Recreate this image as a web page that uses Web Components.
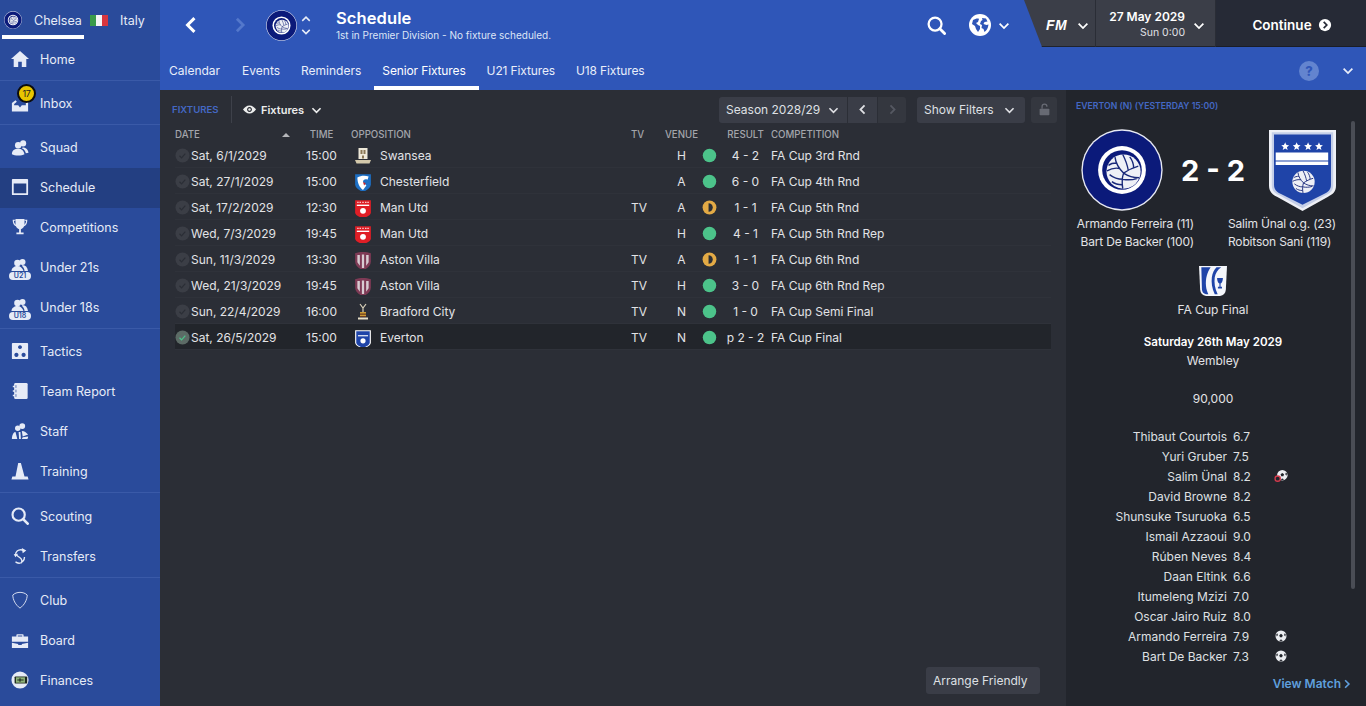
<!DOCTYPE html>
<html lang="en"><head><meta charset="utf-8"><title>Schedule</title>
<style>
html,body{margin:0;height:100%;overflow:hidden;background:#2b2e36}
body{font-family:Inter,"Open Sans","Liberation Sans",sans-serif;font-size:12px;color:#e8e9ec}
</style></head><body>
<fm-app></fm-app>
<script>
const BALL=`<circle cx="12" cy="12" r="11" fill="#eef0f6"/><path d="M12 13C9 10 7 7 6.500 2.700M12 13c3-2 6-3.500 9.500-4.500M12 13c-1 3-1.200 6-.5 10M9.500 10C7 9.500 4 10 1.300 11.500M7.500 6.500C5.500 6.500 3.500 7 2.300 8M15 11c-.5-3-1.500-6-3.500-10M18.500 9.500c0-2.500-1-5-2.500-7M11.500 17c-3 0-6-1-8.500-3M11 20.500c-2.500 0-4.500-.5-6.500-2M12 13c3 2 6 3 10 3M11.500 17c3 .5 6 .5 9-.5" fill="none" stroke="#1a2a7a" stroke-width=".9"/>`;
const ICONS={
home:`<path fill="currentColor" d="M10 1 0 10h3v9h5v-6h4v6h5v-9h3z"/>`,
inbox:`<path fill="currentColor" d="M1 19.500V10l4-3 1.500 1.500L3.500 11v1.500H8l2 2.500 2-2.500h4.500V9H19v10.500z"/>`,
people:`<circle cx="8" cy="8" r="3.600" fill="currentColor"/><circle cx="13.500" cy="6" r="3.400" fill="currentColor"/><path fill="currentColor" d="M1 18c0-4 3-6 7-6s6 2 7 6c-3 2-11 2-14 0zM13 10.500c3 0 6 2 6.500 6l-3 .5c-.5-2-2-5-4.500-5.500z"/>`,
cal:`<path fill="currentColor" fill-rule="evenodd" d="M2 1h16a1 1 0 0 1 1 1v16a1 1 0 0 1-1 1H2a1 1 0 0 1-1-1V2a1 1 0 0 1 1-1zm1 5v11h14V6z"/>`,
trophy:`<path fill="currentColor" d="M5 1h10v6c0 3-2 5-4 5.500V16h3v2H6v-2h3v-3.500C7 12 5 10 5 7z"/><path fill="none" stroke="currentColor" stroke-width="1.200" d="M5 2.500H2.500c0 3 1 5 3 6M15 2.500h2.500c0 3-1 5-3 6"/>`,
u:`<circle cx="8.500" cy="5" r="3.300" fill="currentColor"/><circle cx="13.500" cy="4" r="3" fill="currentColor"/><path fill="currentColor" d="M2.500 13c0-3 3-5 6-5s5 2 6 5zM13.500 7c3 0 5 2 5.500 6h-3.500c0-2-1-4-2.500-5z"/><rect x="0" y="14" width="22" height="8" rx="4" fill="currentColor"/>`,
tactics:`<path fill="currentColor" fill-rule="evenodd" d="M2 1h16a1 1 0 0 1 1 1v16a1 1 0 0 1-1 1H2a1 1 0 0 1-1-1V2a1 1 0 0 1 1-1zm8 2.500a2.200 2.200 0 1 0 .01 0zM6 12a2.300 2.300 0 1 0 .01 0zm8 0a2.300 2.300 0 1 0 .01 0z"/>`,
book:`<path fill="currentColor" d="M5 1h12a1.500 1.500 0 0 1 1.500 1.500v15A1.500 1.500 0 0 1 17 19H5a1.500 1.500 0 0 1-1.500-1.500V2.500A1.500 1.500 0 0 1 5 1z"/><path fill="none" stroke="currentColor" stroke-width="1.400" d="M2 5h3M2 10h3M2 15h3"/><path fill="none" stroke="#2a4b9b" stroke-width=".8" d="M5.500 3.500v3M5.500 8.500v3M5.500 13.500v3"/>`,
staff:`<circle cx="12.500" cy="4.500" r="3.200" fill="currentColor"/><circle cx="7.500" cy="7" r="3" fill="currentColor"/><path fill="currentColor" d="M1 19c0-5 2-8 4-8l2 8zM9 19l-.5-8h2L11 19zM12 10c3 0 5 2 7 4l-6 2z M12 19l1-2 6-1c0 1 0 2-1 3z"/>`,
cone:`<path fill="currentColor" d="M8 1h3l4 15h3.500l1 3.500H.500l1-3.500H5z"/>`,
search:`<circle cx="8.500" cy="8.500" r="6.800" fill="none" stroke="currentColor" stroke-width="2.400"/><path stroke="currentColor" stroke-width="3" stroke-linecap="round" d="M13.500 13.500l5 5"/>`,
transfers:`<path fill="none" stroke="currentColor" stroke-width="1.500" d="M5 9c0-4 3-6 6-6 2 0 3 1 4 1M15 11c0 4-3 7-6 7-2 0-3-.5-4-1.500M6 9c1 1 3 2 4 3 2 1.500 3 4 1 6"/><path fill="currentColor" d="M12 1l5 3-4 3zM3 8l5-.5-3 4z"/>`,
club:`<path fill="none" stroke="currentColor" stroke-width="1" d="M10 1.500c3 0 6 1 8 3 0 5-3 11-8 14.500-5-3.500-8-9.500-8-14.500 2-2 5-3 8-3z"/>`,
board:`<path fill="currentColor" d="M7 3.500h6a1 1 0 0 1 1 1V6h5v6H1V6h5V4.500a1 1 0 0 1 1-1zM7.500 6h5V5h-5zM1 13l7 1.500v1h4v-1l7-1.500v6H1z"/>`,
fin:`<circle cx="10" cy="10" r="9.500" fill="currentColor"/><rect x="4" y="6" width="14" height="8" rx="1" fill="#1e2a20"/><rect x="5.500" y="7" width="10" height="6" fill="#8fb27a"/><path stroke="#1e2a20" stroke-width="1.300" d="M7 10h7M10 8v4"/>`,
chevD:`<path fill="none" stroke="currentColor" stroke-width="2" d="M3 6.500l5 5 5-5"/>`,
chevU:`<path fill="none" stroke="currentColor" stroke-width="2" d="M3 10.500l5-5 5 5"/>`,
chevL:`<path fill="none" stroke="currentColor" stroke-width="2.200" d="M10.500 3l-5 5 5 5"/>`,
chevR:`<path fill="none" stroke="currentColor" stroke-width="2.200" d="M5.500 3l5 5-5 5"/>`,
eye:`<path fill="currentColor" fill-rule="evenodd" d="M8 3c3.500 0 6 2.500 8 5-2 2.500-4.500 5-8 5s-6-2.500-8-5c2-2.500 4.500-5 8-5zm0 2a3 3 0 1 0 .01 0z"/><circle cx="8" cy="8" r="1.500" fill="currentColor"/>`,
lock:`<path fill="currentColor" d="M3 7h10a1 1 0 0 1 1 1v6a1 1 0 0 1-1 1H3a1 1 0 0 1-1-1V8a1 1 0 0 1 1-1z"/><path fill="none" stroke="currentColor" stroke-width="1.600" d="M5 7V4.500a3 3 0 0 1 6 0"/>`,
globe:`<circle cx="11" cy="11" r="11" fill="currentColor"/><path fill="#2f56b8" d="M4 6c2-1 5-2 6-1l-1 3-2 1 2 2 2 1v3l-2 3-2-3-1-3-3-2zM13 4l4 .5 1.500 3-3 .5-1 2 3 1 2-.5c-.5 4-2 6-4 7.500l-1-3-2-1 .5-3-2-1 1-3 1.500-1z"/>`,
continue:`<circle cx="8" cy="8" r="7" fill="currentColor"/><path fill="none" stroke="#262a36" stroke-width="2" d="M6.500 4.500 10 8l-3.500 3.500"/>`,
check:`<circle cx="8" cy="8" r="7.500" fill="currentColor"/><path fill="none" stroke="var(--tick,#2b2e36)" stroke-width="1.300" d="M4.800 8.300l2.200 2.200 4-4.500"/>`,
win:`<circle cx="8" cy="8" r="7.200" fill="#4cc38a"/>`,
draw:`<circle cx="8" cy="8" r="7.400" fill="#e3aa45"/><path fill="#2b2e36" d="M7 3.500A4.500 4.500 0 0 1 7 12.500z"/>`,
ball:`<circle cx="8" cy="8" r="6.300" fill="#eceef2"/><path fill="#22252c" d="M8 5.500l2 1.500-.8 2.300H6.800L6 7zM2.600 5.800l1.500-.6.300 2-1.400 1.400zM13.400 5.800l-1.500-.6-.3 2 1.400 1.400zM6 12.800l2-.9 2 .9-2 1.100z"/>`,
owngoal:`<circle cx="9.500" cy="7" r="6" fill="#eceef2"/><path fill="#22252c" d="M9.500 4.500l2 1.500-.8 2.300H8.300L7.500 6zM14.800 4.800l-1.500-.6-.3 2 1.400 1.400zM7.500 11.800l2-.9 2 .9-2 1.100z"/><circle cx="4.200" cy="11" r="3" fill="#22252c" stroke="#d33a4c" stroke-width="1.500"/>`,
chelsea:`<circle cx="12" cy="12" r="11.900" fill="#e8eaf4"/><circle cx="12" cy="12" r="11.500" fill="#0b1a7a"/><circle cx="12" cy="12" r="7" fill="#fff"/><circle cx="12" cy="12" r="5.800" fill="#0b1a7a"/><g transform="translate(7 7) scale(.4545)">${BALL}</g>`,
everton:`<path fill="#eef0f6" d="M0 0h24v20c0 2-1 3-3 4l-9 5-9-5c-2-1-3-2-3-4z"/><path fill="#c5cfe8" d="M1 .8h22v19c0 2-1 2.800-2.700 3.600L12 28 3.700 23.400C2 22.600 1 21.800 1 19.800z"/><path fill="#1f44a8" d="M1.800 1.600h20.400v18c0 1.800-1 2.600-2.500 3.300L12 26.800l-7.700-3.900c-1.500-.7-2.500-1.500-2.500-3.300z"/><path fill="#fff" d="M2.400 8.100h18.800v2.800H2.400zM2.400 11.300h18.800v1.200H2.400z"/><g fill="#fff"><circle cx="5.800" cy="5.600" r=".5"/><circle cx="9.900" cy="5.600" r=".5"/><circle cx="14" cy="5.600" r=".5"/><circle cx="17.900" cy="5.600" r=".5"/><path d="M5.800 4.400l.4 1 1 .1-.8.7.3 1-.9-.6-.9.6.3-1-.8-.7 1-.1zM9.900 4.400l.4 1 1 .1-.8.7.3 1-.9-.6-.9.6.3-1-.8-.7 1-.1zM14 4.400l.4 1 1 .1-.8.7.3 1-.9-.6-.9.6.3-1-.8-.7 1-.1zM17.900 4.400l.4 1 1 .1-.8.7.3 1-.9-.6-.9.6.3-1-.8-.7 1-.1z"/></g><g transform="translate(8 14.200) scale(.3636)">${BALL}</g>`,
cup:`<path fill="#f4f6fb" d="M0 0h24l-1 19c-.3 3-2 4.500-5 5H6c-3-.5-4.700-2-5-5z"/><path fill="#1f44a8" d="M2 1h8C7 5 5.500 10 6 16c.2 2.500 1 4.500 2 6.500H6c-2.500-.5-3.300-1.800-3.500-4zM15 1h4c-3 2-5 5-5.500 8-.6 4 0 9 2.500 13.500h-2.500C11 18 10.500 13 11 9c.5-3.500 2-6 4-8z"/><path fill="#1f44a8" d="M15.500 9.500h5c0 2.500-1 4-2 4.500v2.500h1.200v1.500h-3.500v-1.500h1.300V14c-1-.5-2-2-2-4.500z"/>`,
swansea:`<path fill="#eee8d8" d="M4.500 1h9v11h-9z"/><path fill="#8a7755" d="M6.500 3h2v4h-2zM9.500 3h2v4h-2zM8 8.500h2v3H8z"/><path fill="#d4c9ab" d="M1 13h16l-1.500 3.500h-13z"/>`,
chesterfield:`<path fill="#1d6fc4" d="M1 1h14v9c0 3-3 5-7 7-4-2-7-4-7-7z"/><path fill="#fff" d="M3 4c3-2 7-2 10-1l-1 3c-2-1-4 0-4 2l3 3-3 4C5 13 3 9 3 4z"/><path fill="#c8242b" d="M8 8l2.500 1-1.500 2z"/>`,
manutd:`<path fill="#e01e26" d="M1 1h14v11c0 2-3 4-7 5-4-1-7-3-7-5z"/><path fill="#fff" d="M2.500 5h11v1.200h-11z"/><circle cx="8" cy="10.500" r="2.600" fill="#fff"/><path fill="#fff" d="M3 2.500h1v1H3zM5 2.500h1v1H5zM7.500 2.500h1v1h-1zM10 2.500h1v1h-1zM12 2.500h1v1h-1z"/>`,
villa:`<path fill="#7e3a55" d="M1 2c4-1.500 10-1.500 14 0v7c0 4-3 6-7 8.500C4 15 1 13 1 9z"/><path fill="#d8ccd2" d="M3 3.500h2.200V13L3 10zM7 3h2v12H7zM10.800 3.500H13V10l-2.200 3z"/>`,
bradford:`<path fill="#c99b35" d="M6 9h6v5H6z"/><path fill="#6e3d1f" d="M6 10.500h6v1.200H6zM6 13h6v1H6z"/><path fill="none" stroke="#d8cfb8" stroke-width="1.200" d="M6 1l3 4 3-4M9 5v4"/><path fill="#e8e0c9" d="M4 14.500h10v2H4z"/>`,
evertonS:`<path fill="#fff" d="M1 1h14v11c0 2.500-3 4-7 5.500-4-1.500-7-3-7-5.500z"/><path fill="#1f44a8" d="M2 2h12v10c0 2-2.500 3.500-6 4.700C4.500 15.500 2 14 2 12z"/><path fill="#fff" d="M3.500 5.500h9v1h-9z"/><circle cx="8" cy="10.500" r="2.300" fill="#fff"/>`,
};
const SZ={chevD:16,chevU:16,chevL:16,chevR:16,eye:16,lock:16,check:16,win:16,draw:16,ball:16,owngoal:16,continue:16,globe:22,u:22,chelsea:24,everton:'0 0 24 29',cup:'0 0 24 24',swansea:18,chesterfield:16,manutd:16,villa:16,bradford:18,evertonS:16};
class FmIcon extends HTMLElement{
  connectedCallback(){
    const n=this.getAttribute('name'),s=+(this.getAttribute('size')||20),h=+(this.getAttribute('h')||s),v=SZ[n];
    const vb=typeof v==='string'?v:`0 0 ${v||20} ${v||20}`;
    this.attachShadow({mode:'open'}).innerHTML=`<style>:host{display:inline-flex;flex:none;width:${s}px;height:${h}px}svg{display:block;width:100%;height:100%}</style><svg viewBox="${vb}" preserveAspectRatio="none" aria-hidden="true">${ICONS[n]}</svg>`;
  }
}
customElements.define('fm-icon',FmIcon);

class FmNavItem extends HTMLElement{
  connectedCallback(){
    const a=this.hasAttribute('active'),ic=this.getAttribute('icon'),tag=this.getAttribute('tag');
    this.attachShadow({mode:'open'}).innerHTML=`<style>
    :host{display:flex;align-items:center;height:40px;position:relative;background:${a?'#233f82':'transparent'};color:#e6ebf7;font-size:12.500px}
    .i{width:40px;display:flex;justify-content:center;flex:none;position:relative;top:${ic==='u'?1:-1}px}
    .t{position:relative;top:-1px}
    .tag{position:absolute;left:0;right:0;bottom:0;text-align:center;font-size:7px;line-height:9px;font-weight:600;color:#2a4b9b}
    .b{position:absolute;left:17px;top:-10px;width:15px;height:15px;border-radius:50%;background:#e8c500;border:2px solid #0d0d0d;color:#222;font-size:9px;display:flex;align-items:center;justify-content:center;letter-spacing:-.5px}
    </style><span class="i"><fm-icon name="${ic}" size="${ic==='u'?22:18}"></fm-icon>${tag?`<span class="tag">${tag}</span>`:''}${this.getAttribute('badge')?`<span class="b">${this.getAttribute('badge')}</span>`:''}</span><span class="t"><slot></slot></span>`;
  }
}
customElements.define('fm-nav-item',FmNavItem);

class FmNavGroup extends HTMLElement{
  connectedCallback(){
    const p=this.getAttribute('pad')||3;
    this.attachShadow({mode:'open'}).innerHTML=`<style>:host{display:block;padding-top:${p}px;border-bottom:1px solid ${this.hasAttribute('last')?'transparent':'#3a5aa8'}}</style><slot></slot>`;
  }
}
customElements.define('fm-nav-group',FmNavGroup);

class FmSidebar extends HTMLElement{
  connectedCallback(){
    this.attachShadow({mode:'open'}).innerHTML=`<style>
    :host{display:flex;flex-direction:column;width:160px;flex:none;background:#2a4b9b;font-size:12.500px;color:#e6ebf7}
    .top{height:39px;box-sizing:border-box;display:flex;align-items:center;padding:1px 0 0 4px;position:relative}
    .top::after{content:"";position:absolute;left:2px;width:82px;height:4px;bottom:0;background:#fff}
    .ch{margin-left:12px;width:46px}
    .fl{margin-left:10px;width:18px;height:11px;display:flex;flex:none}
    .fl i{flex:1}
    .it{margin-left:12px}
    </style>
    <div class="top"><fm-icon name="chelsea" size="18"></fm-icon><span class="ch">Chelsea</span><span class="fl"><i style="background:#3a9a4a"></i><i style="background:#f4f4f4"></i><i style="background:#d8363f"></i></span><span class="it">Italy</span></div>
    <fm-nav-group pad="1"><fm-nav-item icon="home">Home</fm-nav-item></fm-nav-group>
    <fm-nav-group><fm-nav-item icon="inbox" badge="17">Inbox</fm-nav-item></fm-nav-group>
    <fm-nav-group><fm-nav-item icon="people">Squad</fm-nav-item><fm-nav-item icon="cal" active>Schedule</fm-nav-item><fm-nav-item icon="trophy">Competitions</fm-nav-item><fm-nav-item icon="u" tag="U21">Under 21s</fm-nav-item><fm-nav-item icon="u" tag="U18">Under 18s</fm-nav-item></fm-nav-group>
    <fm-nav-group><fm-nav-item icon="tactics">Tactics</fm-nav-item><fm-nav-item icon="book">Team Report</fm-nav-item><fm-nav-item icon="staff">Staff</fm-nav-item><fm-nav-item icon="cone">Training</fm-nav-item></fm-nav-group>
    <fm-nav-group pad="4"><fm-nav-item icon="search">Scouting</fm-nav-item><fm-nav-item icon="transfers">Transfers</fm-nav-item></fm-nav-group>
    <fm-nav-group last><fm-nav-item icon="club">Club</fm-nav-item><fm-nav-item icon="board">Board</fm-nav-item><fm-nav-item icon="fin">Finances</fm-nav-item></fm-nav-group>`;
  }
}
customElements.define('fm-sidebar',FmSidebar);

class FmTopbar extends HTMLElement{
  connectedCallback(){
    const tabs=['Calendar','Events','Reminders','Senior Fixtures','U21 Fixtures','U18 Fixtures'];
    this.attachShadow({mode:'open'}).innerHTML=`<style>
    :host{display:block;background:#2f56b8;color:#fff;height:90px;flex:none}
    .r1{height:47px;display:flex;align-items:center}
    .nav{display:flex;align-items:center;padding-left:20px;flex:none;margin-top:3px}
    .arrows{display:flex;flex-direction:column;color:#e8edf8;margin-left:3px}
    .title{margin-left:24px;display:flex;flex-direction:column;flex:1;position:relative;top:1px}
    .title b{font-size:16.500px;font-weight:600;line-height:21px;letter-spacing:.1px}
    .title span{font-size:10px;line-height:13px;color:#dde5f6}
    .tools{display:flex;align-items:center;color:#fff;flex:none;margin-top:3px}
    .dark{margin-left:13px;width:342px;height:47px;display:flex;flex:none;clip-path:polygon(0 0,100% 0,100% 100%,18px 100%);background:#3b3e48;box-shadow:inset 0 -1px #20232b}
    .fm{width:72px;display:flex;align-items:center;padding:2px 0 0 22px;box-sizing:border-box;gap:9px;border-right:1px solid #2a2d36}
    .fm i{font:italic 900 14px/1 "Liberation Sans",sans-serif;letter-spacing:.5px}
    .date{width:120px;display:flex;align-items:center;box-sizing:border-box;border-right:1px solid #2a2d36;padding:2px 9px 0 0}
    .date div{flex:1;text-align:right;display:flex;flex-direction:column;margin-top:-2px;padding-right:1px}
    .date b{font-size:12px;font-weight:600;line-height:17px}
    .date span{font-size:10.500px;line-height:15px;color:#e0e1e6}
    .go{flex:1;background:#262a36;display:flex;align-items:center;justify-content:center;gap:6px;font-weight:600;font-size:13.500px;padding:2px 0 0 2px;box-shadow:inset 0 -1px #1a1d26}
    .r2{height:43px;display:flex;align-items:stretch;font-size:12px;color:#e9eefa;padding-left:1px}
    .tab{padding:7px 13px 0 8px;display:flex;align-items:center;box-sizing:border-box;border-bottom:4px solid transparent;height:43px}
    .tab:first-child{padding-right:14px}
    .tab:nth-child(n+4){letter-spacing:-.13px}
    .tab.on{border-bottom-color:#fff;color:#fff}
    .sp{flex:1}
    .help{width:20px;height:20px;border-radius:50%;background:#6384cf;color:#2f56b8;font-weight:800;font-size:13px;display:flex;align-items:center;justify-content:center;margin:0 22px 0 0;align-self:center;position:relative;top:2px}
    .mini{align-self:center;margin-right:11px;position:relative;top:1px}
    </style>
    <div class="r1">
      <div class="nav"><fm-icon name="chevL" size="22" style="color:#fff"></fm-icon><fm-icon name="chevR" size="20" style="color:#5478cb;margin-left:28px"></fm-icon><fm-icon name="chelsea" size="31" style="margin-left:16px"></fm-icon><span class="arrows"><fm-icon name="chevU" size="12"></fm-icon><fm-icon name="chevD" size="12"></fm-icon></span></div>
      <div class="title"><b>Schedule</b><span>1st in Premier Division - No fixture scheduled.</span></div>
      <div class="tools"><fm-icon name="search" size="19"></fm-icon><fm-icon name="globe" size="22" style="margin-left:23px"></fm-icon><fm-icon name="chevD" size="14" style="margin-left:6px"></fm-icon></div>
      <div class="dark"><div class="fm"><i>FM</i><fm-icon name="chevD" size="14"></fm-icon></div><div class="date"><div><b>27 May 2029</b><span>Sun 0:00</span></div><fm-icon name="chevD" size="14" style="margin-left:6px"></fm-icon></div><div class="go">Continue<fm-icon name="continue" size="14"></fm-icon></div></div>
    </div>
    <div class="r2">${tabs.map(t=>`<span class="tab${t==='Senior Fixtures'?' on':''}">${t}</span>`).join('')}<span class="sp"></span><span class="help">?</span><fm-icon class="mini" name="chevD" size="14"></fm-icon></div>`;
  }
}
customElements.define('fm-topbar',FmTopbar);

class FmButton extends HTMLElement{
  connectedCallback(){
    this.attachShadow({mode:'open'}).innerHTML=`<style>:host{display:inline-flex;align-items:center;height:26px;background:#3a3d47;color:#dfe0e4;font-size:12px;border-radius:3px;box-sizing:border-box;padding:0 7px;gap:7px;white-space:nowrap}</style><slot></slot>`;
  }
}
customElements.define('fm-button',FmButton);

class FmRow extends HTMLElement{
  connectedCallback(){
    const g=k=>this.getAttribute(k)||'',sel=this.hasAttribute('sel');
    this.attachShadow({mode:'open'}).innerHTML=`<style>
    :host{display:grid;grid-template-columns:125px 43px 8px 280px 34px 33px 22px 51px 1fr;height:26px;box-sizing:border-box;padding-top:1px;align-items:center;font-size:12px;color:#e2e3e6;background:${sel?'#22252b':'transparent'};box-shadow:inset 0 -1px #2f323a}
    .d{display:flex;align-items:center;gap:1px}
    .c{text-align:center}
    .o{display:flex;align-items:center}
    .o fm-icon{margin-right:8px;margin-left:3px}
    .dot{display:flex;justify-content:center}
    </style>
    <span class="d"><fm-icon name="check" size="15" style="color:${sel?'#5c6b66':'#3b3e46'};--tick:${sel?'#4cc38a':'#2b2e36'}"></fm-icon><span>${g('date')}</span></span>
    <span class="c">${g('time')}</span><span></span>
    <span class="o"><fm-icon name="${g('badge')}" size="18"></fm-icon>${g('opp')}</span>
    <span>${g('tv')}</span><span class="c">${g('venue')}</span>
    <span class="dot"><fm-icon name="${g('res')}" size="15"></fm-icon></span>
    <span class="c">${g('score')}</span><span>${g('comp')}</span>`;
  }
}
customElements.define('fm-row',FmRow);

class FmFixtures extends HTMLElement{
  connectedCallback(){
    this.attachShadow({mode:'open'}).innerHTML=`<style>
    :host{display:flex;flex-direction:column;flex:1;min-width:0;background:#2b2e36;position:relative}
    .bar{height:38px;box-sizing:border-box;display:flex;align-items:center;padding:1px 9px 0 12px}
    .lab{font-size:9.600px;font-weight:600;color:#4468c4;width:59px;flex:none}
    .sep{width:1px;height:27px;background:#3e414a;flex:none}
    .view{display:flex;align-items:center;margin-left:11px;font-weight:600;font-size:11px;color:#eceded}
    .sp{flex:1}
    .seg{display:flex;gap:1px}
    .head{display:grid;grid-template-columns:125px 43px 8px 280px 34px 33px 22px 51px 1fr;height:13px;margin:0 15px;align-items:center;font-size:9.700px;font-weight:500;color:#a3a5ab}
    .head .c{text-align:center}
    .rows{margin:1px 15px 0;display:flex;flex-direction:column}
    .foot{position:absolute;right:26px;bottom:12px}
    .sort{display:flex;justify-content:space-between;padding-right:10px}
    .sort i{width:0;height:0;border:4px solid transparent;border-bottom:4px solid #b5b6ba;border-top:0;align-self:center}
    </style>
    <div class="bar"><span class="lab">FIXTURES</span><span class="sep"></span><span class="view"><fm-icon name="eye" size="13" style="margin-right:5px"></fm-icon>Fixtures<fm-icon name="chevD" size="13" style="margin-left:6px"></fm-icon></span><span class="sp"></span>
      <div class="seg"><fm-button style="width:128px;border-radius:3px 0 0 3px">Season 2028/29<fm-icon name="chevD" size="13" style="margin-left:auto;margin-right:4px"></fm-icon></fm-button><fm-button style="width:29px;border-radius:0;justify-content:center;padding:0"><fm-icon name="chevL" size="13"></fm-icon></fm-button><fm-button style="width:28px;border-radius:0 3px 3px 0;justify-content:center;padding:0;color:#555862;background:#34373f"><fm-icon name="chevR" size="13"></fm-icon></fm-button></div>
      <fm-button style="width:108px;margin-left:11px">Show Filters<fm-icon name="chevD" size="13" style="margin-left:auto;margin-right:2px"></fm-icon></fm-button>
      <fm-button style="width:26px;margin-left:6px;padding:0;justify-content:center;color:#676a73;background:#34373f"><fm-icon name="lock" size="13"></fm-icon></fm-button>
    </div>
    <div class="head"><span class="sort">DATE<i></i></span><span class="c">TIME</span><span></span><span>OPPOSITION</span><span>TV</span><span class="c">VENUE</span><span></span><span class="c">RESULT</span><span>COMPETITION</span></div>
    <div class="rows"><slot></slot></div>
    <div class="foot"><fm-button style="width:114px;height:27px;font-size:12px">Arrange Friendly</fm-button></div>`;
  }
}
customElements.define('fm-fixtures',FmFixtures);

class FmPlayer extends HTMLElement{
  connectedCallback(){
    const g=this.getAttribute('goal');
    this.attachShadow({mode:'open'}).innerHTML=`<style>
    :host{display:grid;grid-template-columns:161px 6px 40px 1fr;height:20px;align-items:center;font-size:12px;color:#dfe0e3}
    .n{text-align:right}
    .g{display:flex;padding-left:1px}
    </style><span class="n"><slot></slot></span><span></span><span>${this.getAttribute('r')}</span><span class="g">${g?`<fm-icon name="${g}" size="14"></fm-icon>`:''}</span>`;
  }
}
customElements.define('fm-player',FmPlayer);

class FmPanel extends HTMLElement{
  connectedCallback(){
    const P=[['Thibaut Courtois','6.7'],['Yuri Gruber','7.5'],['Salim Ünal','8.2','owngoal'],['David Browne','8.2'],['Shunsuke Tsuruoka','6.5'],['Ismail Azzaoui','9.0'],['Rúben Neves','8.4'],['Daan Eltink','6.6'],['Itumeleng Mzizi','7.0'],['Oscar Jairo Ruiz','8.0'],['Armando Ferreira','7.9','ball'],['Bart De Backer','7.3','ball']];
    this.attachShadow({mode:'open'}).innerHTML=`<style>
    :host{display:flex;flex-direction:column;width:300px;flex:none;background:#22252c;position:relative;font-size:12px;color:#e2e3e6;box-sizing:border-box}
    .hd{font-size:8.700px;font-weight:600;color:#4468c4;padding:10px 0 0 10px;line-height:13px;height:26px;box-sizing:border-box}
    .sb{position:absolute;right:11px;top:31px;width:4px;height:468px;background:#4a4d55;border-radius:2px}
    .score{display:flex;align-items:center;padding:13px 0 0 15px}
    .score b{width:64px;margin:0 24px 0 18px;text-align:center;font-size:29px;font-weight:700;color:#fff;white-space:nowrap}
    .sc{display:grid;grid-template-columns:124px 34px 1fr;padding:4px 0 0 4px;line-height:18px;white-space:nowrap;letter-spacing:-.18px}
    .sc div:first-child{text-align:right}
    .mid{display:flex;flex-direction:column;align-items:center;width:294px;text-align:center;line-height:18px}
    .mid .v{font-weight:600;font-size:11.600px;color:#fff}
    .pl{margin-top:18px}
    .vm{position:absolute;right:13px;bottom:15px;color:#5f9fdc;font-weight:600;font-size:12px;display:flex;align-items:center}
    </style>
    <div class="hd">EVERTON (N) (YESTERDAY 15:00)</div><div class="sb"></div>
    <div class="score"><fm-icon name="chelsea" size="82"></fm-icon><b>2 - 2</b><fm-icon name="everton" size="67" h="81"></fm-icon></div>
    <div class="sc"><div>Armando Ferreira (11)<br>Bart De Backer (100)</div><span></span><div>Salim Ünal o.g. (23)<br>Robitson Sani (119)</div></div>
    <div class="mid" style="margin-top:15px"><fm-icon name="cup" size="28" h="30"></fm-icon><span style="margin-top:5px">FA Cup Final</span></div>
    <div class="mid" style="margin-top:14px"><span class="v">Saturday 26th May 2029</span><span style="margin-top:1px">Wembley</span><span style="margin-top:20px">90,000</span></div>
    <div class="pl">${P.map(p=>`<fm-player r="${p[1]}"${p[2]?` goal="${p[2]}"`:''}>${p[0]}</fm-player>`).join('')}</div>
    <div class="vm">View Match<fm-icon name="chevR" size="12"></fm-icon></div>`;
  }
}
customElements.define('fm-panel',FmPanel);

class FmApp extends HTMLElement{
  connectedCallback(){
    const R=[['Sat, 6/1/2029','15:00','swansea','Swansea','','H','win','4 - 2','FA Cup 3rd Rnd'],['Sat, 27/1/2029','15:00','chesterfield','Chesterfield','','A','win','6 - 0','FA Cup 4th Rnd'],['Sat, 17/2/2029','12:30','manutd','Man Utd','TV','A','draw','1 - 1','FA Cup 5th Rnd'],['Wed, 7/3/2029','19:45','manutd','Man Utd','','H','win','4 - 1','FA Cup 5th Rnd Rep'],['Sun, 11/3/2029','13:30','villa','Aston Villa','TV','A','draw','1 - 1','FA Cup 6th Rnd'],['Wed, 21/3/2029','19:45','villa','Aston Villa','TV','H','win','3 - 0','FA Cup 6th Rnd Rep'],['Sun, 22/4/2029','16:00','bradford','Bradford City','TV','N','win','1 - 0','FA Cup Semi Final'],['Sat, 26/5/2029','15:00','evertonS','Everton','TV','N','win','p 2 - 2','FA Cup Final']];
    this.attachShadow({mode:'open'}).innerHTML=`<style>
    :host{display:flex;height:706px;width:1366px;overflow:hidden}
    .m{flex:1;display:flex;flex-direction:column;min-width:0}
    .c{flex:1;display:flex;min-height:0}
    </style><fm-sidebar></fm-sidebar><div class="m"><fm-topbar></fm-topbar><div class="c"><fm-fixtures>${R.map((r,i)=>`<fm-row date="${r[0]}" time="${r[1]}" badge="${r[2]}" opp="${r[3]}" tv="${r[4]}" venue="${r[5]}" res="${r[6]}" score="${r[7]}" comp="${r[8]}"${i==7?' sel':''}></fm-row>`).join('')}</fm-fixtures><fm-panel></fm-panel></div></div>`;
  }
}
customElements.define('fm-app',FmApp);
</script></body></html>
